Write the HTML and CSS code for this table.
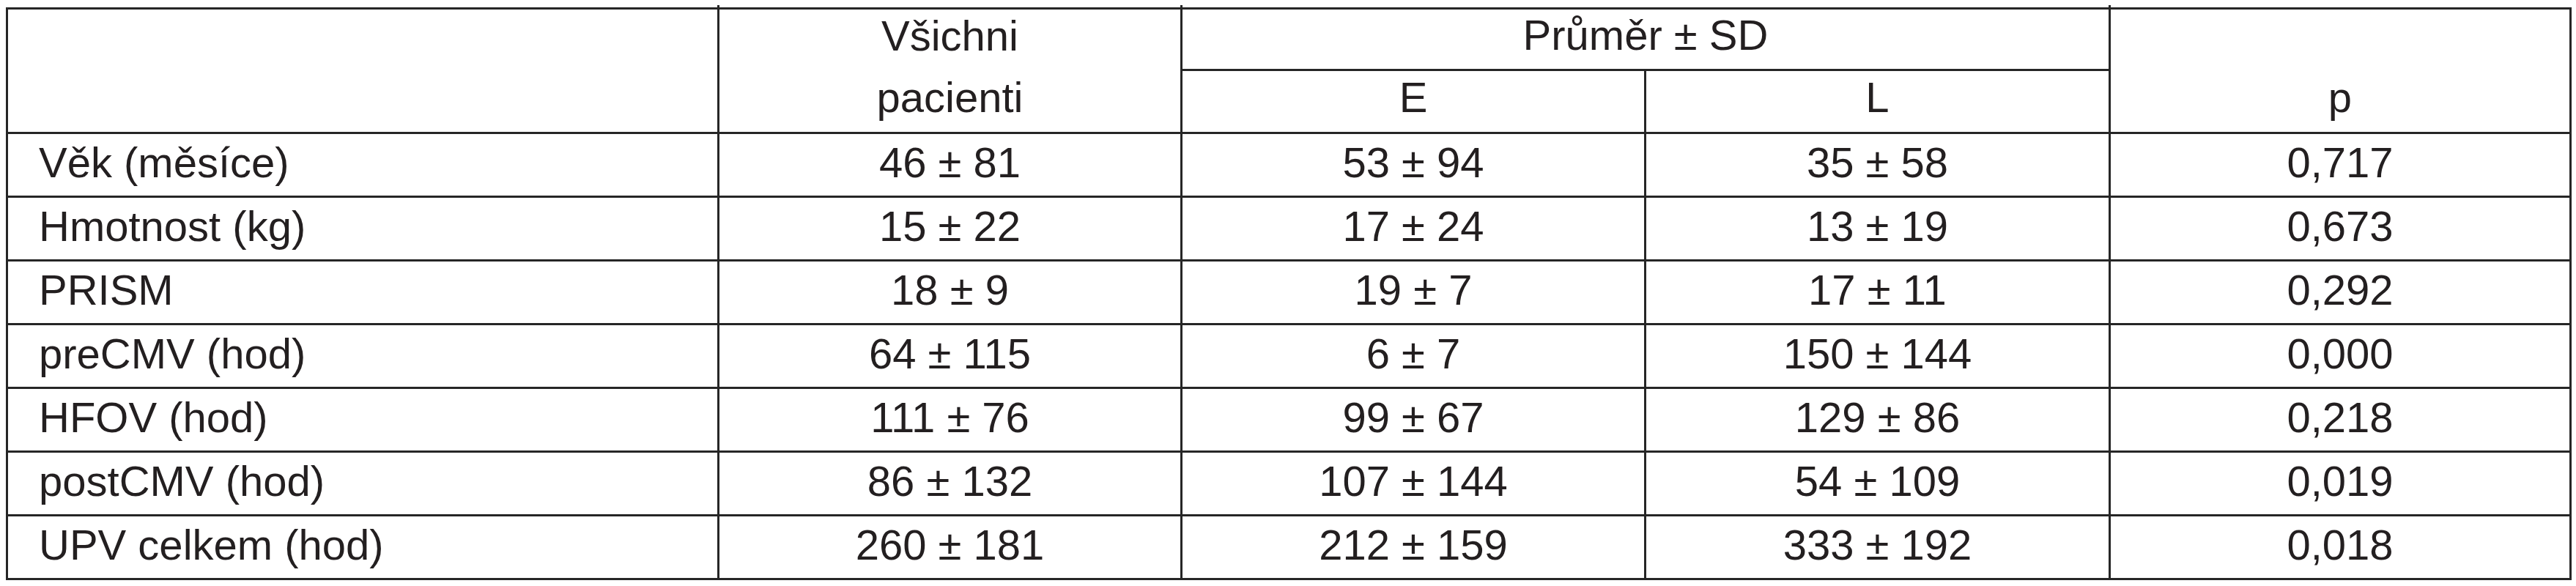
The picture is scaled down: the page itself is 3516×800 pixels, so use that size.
FILE: index.html
```html
<!DOCTYPE html>
<html lang="cs">
<head>
<meta charset="utf-8">
<title>Tabulka</title>
<link rel="stylesheet" href="styles.css">
</head>
<body>
<table class="data">
  <colgroup>
    <col class="c-label">
    <col class="c-all">
    <col class="c-e">
    <col class="c-l">
    <col class="c-p">
  </colgroup>
  <thead>
    <tr class="h1">
      <th rowspan="2" class="tick"></th>
      <th class="open tick">Všichni</th>
      <th colspan="2">Průměr ± SD</th>
      <th class="open tick-left"></th>
    </tr>
    <tr class="h2">
      <th>pacienti</th>
      <th>E</th>
      <th>L</th>
      <th>p</th>
    </tr>
  </thead>
  <tbody>
    <tr><td class="label">Věk (měsíce)</td><td>46 ± 81</td><td>53 ± 94</td><td>35 ± 58</td><td>0,717</td></tr>
    <tr><td class="label">Hmotnost (kg)</td><td>15 ± 22</td><td>17 ± 24</td><td>13 ± 19</td><td>0,673</td></tr>
    <tr><td class="label">PRISM</td><td>18 ± 9</td><td>19 ± 7</td><td>17 ± 11</td><td>0,292</td></tr>
    <tr><td class="label">preCMV (hod)</td><td>64 ± 115</td><td>6 ± 7</td><td>150 ± 144</td><td>0,000</td></tr>
    <tr><td class="label">HFOV (hod)</td><td>111 ± 76</td><td>99 ± 67</td><td>129 ± 86</td><td>0,218</td></tr>
    <tr><td class="label">postCMV (hod)</td><td>86 ± 132</td><td>107 ± 144</td><td>54 ± 109</td><td>0,019</td></tr>
    <tr><td class="label">UPV celkem (hod)</td><td>260 ± 181</td><td>212 ± 159</td><td>333 ± 192</td><td>0,018</td></tr>
  </tbody>
</table>
</body>
</html>
```

FILE: styles.css
```css
html, body {
  margin: 0;
  padding: 0;
  background: #ffffff;
}

body {
  padding: 10px 0 0 8px;
  font-family: "Liberation Sans", Arial, Helvetica, sans-serif;
  color: #231f20;
}

.data {
  table-layout: fixed;
  width: 3502px;
  border-collapse: separate;
  border-spacing: 0;
  border-top: 3px solid #262626;
  border-left: 3px solid #262626;
  font-size: 58px;
}

.c-label { width: 971px; }
.c-all { width: 632px; }
.c-e { width: 633px; }
.c-l { width: 634px; }
.c-p { width: 629px; }

.data th,
.data td {
  border-right: 3px solid #262626;
  border-bottom: 3px solid #262626;
  padding: 0 0 7px 0;
  text-align: center;
  vertical-align: middle;
  font-weight: normal;
  white-space: nowrap;
  position: relative;
}

.data th {
  padding-bottom: 13px;
}

.data th.open {
  border-bottom: none;
}

.h1 { height: 84px; }
.h2 { height: 86px; }
.data tbody tr { height: 87px; }

.data td.label {
  text-align: left;
  padding-left: 42px;
}

/* small overshoot of the column rules above the top border */
.data th.tick::before {
  content: "";
  position: absolute;
  top: -6px;
  right: -3px;
  width: 3px;
  height: 3px;
  background: #262626;
}

.data th.tick-left::before {
  content: "";
  position: absolute;
  top: -6px;
  left: -3px;
  width: 3px;
  height: 3px;
  background: #262626;
}
```
